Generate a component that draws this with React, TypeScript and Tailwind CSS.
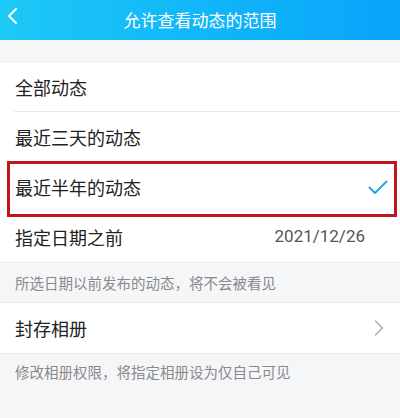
import React from 'react';

const font = { fontFamily: '"Noto Sans CJK SC", "Noto Sans", sans-serif' };

const Row = ({ children, divider = false }: { children: React.ReactNode; divider?: boolean }) => (
    <div className="relative flex h-[50px] items-center justify-between bg-white pl-[15px]">
        {children}
        {divider && <div className="absolute bottom-0 left-[14px] right-0 h-px bg-[#e8e8ea]" />}
    </div>
);

const App = () => {
    return (
        <div className="h-[418px] w-[400px] overflow-hidden bg-[#f5f6f8]" style={font}>
            {/* 상단 헤더 */}
            <div className="relative flex h-[40px] items-center justify-center bg-gradient-to-r from-[#1ec8f7] to-[#08a4fa]">
                <svg className="absolute left-[6px] top-[8px]" width="12" height="16" viewBox="0 0 12 16">
                    <path d="M10 1 L3 8 L10 15" fill="none" stroke="#fff" strokeWidth="2" strokeLinecap="round" strokeLinejoin="round" />
                </svg>
                <span className="text-[17px] text-white">允许查看动态的范围</span>
            </div>

            <div className="h-[22px] border-b border-[#ececee]" />

            <div className="relative">
                <Row divider>
                    <span className="text-[18px] text-[#222]">全部动态</span>
                </Row>
                <Row>
                    <span className="text-[18px] text-[#222]">最近三天的动态</span>
                </Row>
                <Row>
                    <span className="text-[18px] text-[#222]">最近半年的动态</span>
                    <svg className="mr-[12px]" width="20" height="15" viewBox="0 0 20 15">
                        <path d="M1.5 7.5 L7 13 L18.5 1.5" fill="none" stroke="#27a5e4" strokeWidth="2" strokeLinecap="round" strokeLinejoin="round" />
                    </svg>
                </Row>
                <Row>
                    <span className="text-[18px] text-[#222]">指定日期之前</span>
                    <span className="pr-[35px] text-[17px] text-[#555]" style={{ fontFamily: 'Roboto, "Noto Sans", sans-serif' }}>2021/12/26</span>
                </Row>
                {/* 선택 강조 박스 */}
                <div className="pointer-events-none absolute left-[7px] right-[3px] top-[99px] h-[56px] border-[3px] border-[#c3161c]" />
            </div>

            <div className="flex h-[41px] items-center border-y border-[#ececee] px-[15px]">
                <span className="text-[14.5px] text-[#8a8a8e]">所选日期以前发布的动态，将不会被看见</span>
            </div>

            <Row>
                <span className="text-[18px] text-[#222]">封存相册</span>
                <svg className="mr-[16px]" width="10" height="16" viewBox="0 0 10 16">
                    <path d="M1.5 1 L8.5 8 L1.5 15" fill="none" stroke="#b4b4b8" strokeWidth="1.6" strokeLinecap="round" strokeLinejoin="round" />
                </svg>
            </Row>

            <div className="border-t border-[#ececee] px-[15px] pt-[5px]">
                <span className="text-[14.5px] text-[#8a8a8e]">修改相册权限，将指定相册设为仅自己可见</span>
            </div>
        </div>
    );
};

export default App;
